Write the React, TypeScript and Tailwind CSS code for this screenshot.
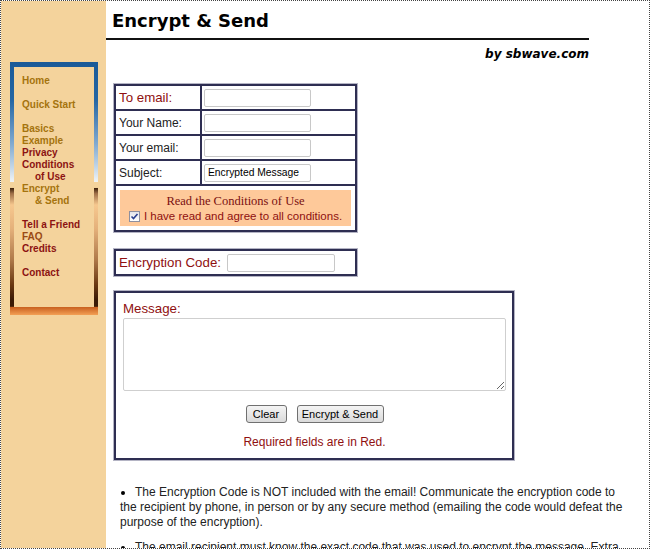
import React from 'react';

const sans = "font-['Liberation_Sans',Arial,sans-serif]";

type NavItem = { label: string; color: 'gold' | 'red' | 'brown'; indent?: boolean } | null;

const nav: NavItem[] = [
  { label: 'Home', color: 'gold' },
  null,
  { label: 'Quick Start', color: 'gold' },
  null,
  { label: 'Basics', color: 'gold' },
  { label: 'Example', color: 'gold' },
  { label: 'Privacy', color: 'red' },
  { label: 'Conditions', color: 'red' },
  { label: 'of Use', color: 'red', indent: true },
  { label: 'Encrypt', color: 'gold' },
  { label: '& Send', color: 'gold', indent: true },
  null,
  { label: 'Tell a Friend', color: 'red' },
  { label: 'FAQ', color: 'brown' },
  { label: 'Credits', color: 'red' },
  null,
  { label: 'Contact', color: 'red' },
];

const navColor = {
  gold: 'text-[#a5730e]',
  red: 'text-[#8c1212]',
  brown: 'text-[#9a4a14]',
};

function Frame({ className, children }: { className?: string; children: React.ReactNode }) {
  return (
    <div className={'border border-[#b4b4c4] ' + (className ?? '')}>
      <div className="border-2 border-[#2e2e52] bg-white">{children}</div>
    </div>
  );
}

function Field({ value, width = 'w-[107px]' }: { value?: string; width?: string }) {
  return (
    <input
      readOnly
      value={value ?? ''}
      className={`${width} h-[18px] border border-[#c8c8c8] rounded-[2px] px-[3px] text-[10.3px] text-black outline-none ${sans}`}
    />
  );
}

export default function App() {
  return (
    <div className="w-[650px] h-[549px] overflow-hidden border border-dotted border-[#444] flex bg-white">
      <aside className="w-[105px] shrink-0 bg-[#f4d39c] pt-[61px] pl-[9px]">
        <div className="w-[88px] h-[253px] pt-[5px] px-[4px] pb-[8px] bg-[linear-gradient(to_bottom,#1a5a98_0%,#2566a3_15%,#7fa8cf_32%,#c6d8e8_42%,#f1f4f6_47.4%,#f4d39c_47.5%,#f4d39c_49.6%,#3a1e0a_49.8%,#a07048_52%,#f6c88f_56.5%,#e4b07a_66%,#b07a4a_78%,#6a3812_88%,#3a1a06_94%,#3a1a06_96.6%,#c85f1e_96.8%,#f3a055_100%)]">
          <nav className={`h-full bg-[#f4d39c] pt-[8px] pl-[8px] text-[10px] leading-[12px] font-bold ${sans}`}>
            {nav.map((item, i) =>
              item ? (
                <div key={i} className={`${navColor[item.color]} ${item.indent ? 'pl-[13px]' : ''}`}>
                  {item.label}
                </div>
              ) : (
                <div key={i} className="h-[12px]" />
              )
            )}
          </nav>
        </div>
      </aside>

      <main className="flex-1">
        <h1 className="ml-[6px] mt-[9px] text-[18px] leading-[22px] font-bold text-black font-['DejaVu_Sans',sans-serif]">
          Encrypt &amp; Send
        </h1>
        <div className="mt-[6px] h-[2px] w-[483px] bg-[#111]" />
        <p className="mt-[6px] w-[483px] text-right text-[12px] leading-[16px] font-bold italic text-black font-['DejaVu_Sans',sans-serif]">
          by sbwave.com
        </p>

        <form className={`ml-[7px] mt-[21px] ${sans}`}>
          <Frame className="w-[245px]">
            <div className="grid grid-cols-[84px_1fr] gap-[2px] bg-[#2e2e52]">
              <div className="h-[23px] bg-white flex items-center pl-[3px] text-[13.3px] text-[#8f1010]">To email:</div>
              <div className="h-[23px] bg-white flex items-center pl-[2px]"><Field /></div>
              <div className="h-[23px] bg-white flex items-center pl-[3px] text-[12px] text-[#222]">Your Name:</div>
              <div className="h-[23px] bg-white flex items-center pl-[2px]"><Field /></div>
              <div className="h-[23px] bg-white flex items-center pl-[3px] text-[12px] text-[#222]">Your email:</div>
              <div className="h-[23px] bg-white flex items-center pl-[2px]"><Field /></div>
              <div className="h-[23px] bg-white flex items-center pl-[3px] text-[12px] text-[#222]">Subject:</div>
              <div className="h-[23px] bg-white flex items-center pl-[2px]"><Field value="Encrypted Message" /></div>
              <div className="col-span-2 h-[44px] bg-white p-[4px]">
                <div className="h-full bg-[#fec99a] flex flex-col items-center justify-center pt-[2px]">
                  <div className="text-[12.5px] leading-[15px] text-[#7a1010] font-['Liberation_Serif','Times_New_Roman',serif]">
                    Read the Conditions of Use
                  </div>
                  <label className="flex items-center gap-[4px] text-[11.5px] leading-[15px] text-[#8f1010]">
                    <span className="w-[11px] h-[11px] border border-[#8e8f9f] bg-[linear-gradient(to_bottom,#e4e4ea,#ffffff)] flex items-center justify-center">
                      <svg width="9" height="9" viewBox="0 0 9 9">
                        <path d="M1.5 4.5 L3.5 6.5 L7.5 2" fill="none" stroke="#2a3f8f" strokeWidth="1.6" />
                      </svg>
                    </span>
                    I have read and agree to all conditions.
                  </label>
                </div>
              </div>
            </div>
          </Frame>

          <Frame className="w-[245px] mt-[15px]">
            <div className="h-[23px] flex items-center gap-[6px] pl-[3px]">
              <span className="text-[13.3px] text-[#8f1010]">Encryption Code:</span>
              <Field width="w-[108px]" />
            </div>
          </Frame>

          <Frame className="w-[402px] mt-[13px]">
            <div className="pt-[8px] pb-[8px] pl-[7px]">
              <div className="text-[13.3px] leading-[16px] text-[#8f1010]">Message:</div>
              <textarea
                readOnly
                className="mt-[1px] block w-[383px] h-[73px] border border-[#cfcfcf] rounded-[2px] outline-none"
              />
              <div className="mt-[14px] w-[383px] flex justify-center gap-[10px]">
                <button type="button" className="w-[41px] h-[18px] border border-[#707070] rounded-[3px] bg-[linear-gradient(to_bottom,#f4f4f4,#dadada)] text-[11px] leading-[16px] text-black">
                  Clear
                </button>
                <button type="button" className="w-[87px] h-[18px] border border-[#707070] rounded-[3px] bg-[linear-gradient(to_bottom,#f4f4f4,#dadada)] text-[11px] leading-[16px] text-black">
                  Encrypt &amp; Send
                </button>
              </div>
              <div className="mt-[11px] w-[383px] text-center text-[12px] leading-[16px] text-[#8f1010]">
                Required fields are in Red.
              </div>
            </div>
          </Frame>
        </form>

        <ul className={`ml-[14px] mt-[24px] w-[512px] text-[12px] leading-[15px] text-[#222] ${sans}`}>
          <li>
            <span className="inline-block w-[4px] h-[4px] rounded-full bg-black align-middle ml-[1px] mr-[10px]" />
            The Encryption Code is NOT included with the email! Communicate the encryption code to the recipient by
            phone, in person or by any secure method (emailing the code would defeat the purpose of the encryption).
          </li>
          <li className="mt-[10px]">
            <span className="inline-block w-[4px] h-[4px] rounded-full bg-black align-middle ml-[1px] mr-[10px]" />
            The email recipient must know the exact code that was used to encrypt the message. Extra spaces or a
            different capitalization will produce a different result.
          </li>
        </ul>
      </main>
    </div>
  );
}
